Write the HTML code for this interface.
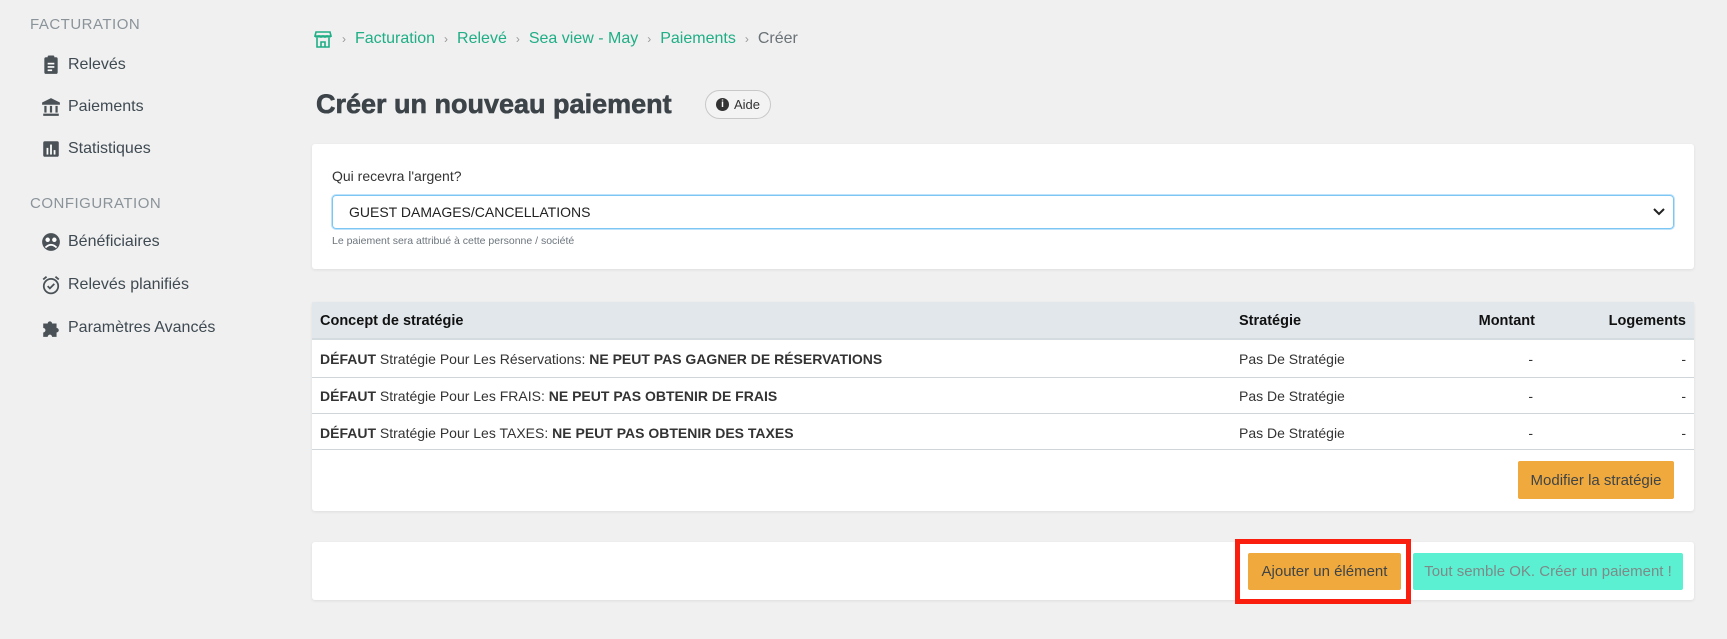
<!DOCTYPE html>
<html><head><meta charset="utf-8"><style>
*{box-sizing:border-box;margin:0;padding:0}
body{width:1727px;height:639px;background:#f0f0f0;font-family:"Liberation Sans",Arial,sans-serif;color:#333;position:relative;overflow:hidden}
.a{position:absolute}
.sec{color:#8a9399;font-size:15px;letter-spacing:.5px;left:30px}
.it{left:41px;font-size:16px;color:#3f4a52;display:flex;align-items:center;gap:7px}
.it svg{width:20px;height:20px}
.bc{left:313px;top:29px;font-size:16px;display:flex;align-items:center;gap:9px;color:#1fae85}
.bc .s{color:#999;font-size:12px}
.card{background:#fff;border-radius:3px;box-shadow:0 1px 3px rgba(0,0,0,.08)}
.row{position:absolute;left:0;right:0;border-top:1px solid #cfd5d9;font-size:14px;color:#333}
.btn{position:absolute;background:#f0a93d;color:#3f4448;font-size:15px;display:flex;align-items:center;justify-content:center;border-radius:2px}
</style></head><body>
<div class="a sec" style="top:16px">FACTURATION</div>
<div class="a it" style="top:55px"><svg viewBox="0 0 18 18"><rect x="3" y="2" width="12" height="15" rx="1.5" fill="#4a5257"/><rect x="6" y="0.5" width="6" height="3" rx="1" fill="#4a5257"/><rect x="6" y="7" width="6" height="1.5" fill="#fff"/><rect x="6" y="10" width="6" height="1.5" fill="#fff"/><rect x="6" y="13" width="4" height="1.5" fill="#fff"/></svg>Relevés</div>
<div class="a it" style="top:97px"><svg viewBox="0 0 18 18"><path d="M9 1L1 5v2h16V5z M2 15h14v2H2z" fill="#4a5257"/><rect x="3" y="8" width="2" height="6" fill="#4a5257"/><rect x="8" y="8" width="2" height="6" fill="#4a5257"/><rect x="13" y="8" width="2" height="6" fill="#4a5257"/></svg>Paiements</div>
<div class="a it" style="top:139px"><svg viewBox="0 0 18 18"><rect x="2" y="2" width="14" height="14" rx="1.5" fill="#4a5257"/><rect x="5" y="8" width="1.6" height="6" fill="#fff"/><rect x="8.2" y="5" width="1.6" height="9" fill="#fff"/><rect x="11.4" y="10" width="1.6" height="4" fill="#fff"/></svg>Statistiques</div>
<div class="a sec" style="top:195px">CONFIGURATION</div>
<div class="a it" style="top:232px"><svg viewBox="0 0 18 18"><circle cx="9" cy="9" r="8" fill="#4a5257"/><circle cx="6" cy="7" r="2" fill="#fff"/><circle cx="12" cy="7" r="2" fill="#fff"/><path d="M4 14q5-5 10 0" stroke="#fff" stroke-width="1.6" fill="none"/></svg>Bénéficiaires</div>
<div class="a it" style="top:275px"><svg viewBox="0 0 18 18"><circle cx="9" cy="10" r="6.5" stroke="#4a5257" stroke-width="1.6" fill="none"/><path d="M6 10l2 2 4-4M2 4l3-2.5M16 4l-3-2.5" stroke="#4a5257" stroke-width="1.6" fill="none"/></svg>Relevés planifiés</div>
<div class="a it" style="top:318px"><svg viewBox="0 0 18 18"><path d="M2 5h4a2 2 0 1 1 4 0h4v4a2 2 0 1 1 0 4v4H10a2 2 0 1 0-4 0H2v-4a2 2 0 1 0 0-4z" fill="#4a5257"/></svg>Paramètres Avancés</div>

<div class="a bc"><svg width="20" height="20" viewBox="0 0 20 20" fill="none" stroke="#1fae85" stroke-width="1.6"><path d="M3 3h14l1 4H2z"/><path d="M2 7q2 2 4 0q2 2 4 0q2 2 4 0q2 2 4 0"/><path d="M4 9v9h12V9"/><path d="M8 18v-5h4v5"/></svg><span class="s">›</span>Facturation<span class="s">›</span>Relevé<span class="s">›</span>Sea view - May<span class="s">›</span>Paiements<span class="s">›</span><span style="color:#6a7277">Créer</span></div>

<div class="a" style="left:316px;top:89px;font-size:27px;font-weight:bold;color:#3c4449;-webkit-text-stroke:0.6px #3c4449">Créer un nouveau paiement</div>
<div class="a" style="left:705px;top:90px;width:66px;height:29px;border:1px solid #c8c8c8;border-radius:15px;background:#f3f3f3;font-size:13px;color:#333;display:flex;align-items:center;justify-content:center;gap:5px"><span style="width:13px;height:13px;border-radius:50%;background:#333;color:#fff;font-size:10px;font-weight:bold;display:flex;align-items:center;justify-content:center">i</span>Aide</div>

<div class="a card" style="left:312px;top:144px;width:1382px;height:125px">
<div class="a" style="left:20px;top:24px;font-size:14px">Qui recevra l'argent?</div>
<div class="a" style="left:20px;top:51px;width:1342px;height:34px;border:1px solid #7cc6f3;border-radius:4px;box-shadow:0 0 0 1px #bfe3fa;font-size:14px;color:#222;display:flex;align-items:center;padding-left:16px">GUEST DAMAGES/CANCELLATIONS<svg class="a" style="right:8px;top:12px" width="12" height="8" viewBox="0 0 12 8"><path d="M1 1l5 5 5-5" stroke="#222" stroke-width="2" fill="none"/></svg></div>
<div class="a" style="left:20px;top:91px;font-size:10.5px;color:#6c757d">Le paiement sera attribué à cette personne / société</div>
</div>

<div class="a card" style="left:312px;top:302px;width:1382px;height:209px">
<div class="a" style="left:0;right:0;top:0;height:38px;background:#e1e7ea;border-bottom:2px solid #d5dcdf;font-size:14.5px;font-weight:bold;color:#111">
<span class="a" style="left:8px;top:11px">Concept de stratégie</span><span class="a" style="left:927px;top:11px">Stratégie</span><span class="a" style="right:159px;top:11px">Montant</span><span class="a" style="right:8px;top:11px">Logements</span></div>
<div class="row" style="top:38px;height:37px;border-top:none"><span class="a" style="left:8px;top:11px"><b>DÉFAUT</b> Stratégie Pour Les Réservations: <b>NE PEUT PAS GAGNER DE RÉSERVATIONS</b></span><span class="a" style="left:927px;top:11px">Pas De Stratégie</span><span class="a" style="right:161px;top:11px">-</span><span class="a" style="right:8px;top:11px">-</span></div>
<div class="row" style="top:75px;height:36px"><span class="a" style="left:8px;top:10px"><b>DÉFAUT</b> Stratégie Pour Les FRAIS: <b>NE PEUT PAS OBTENIR DE FRAIS</b></span><span class="a" style="left:927px;top:10px">Pas De Stratégie</span><span class="a" style="right:161px;top:10px">-</span><span class="a" style="right:8px;top:10px">-</span></div>
<div class="row" style="top:111px;height:36px"><span class="a" style="left:8px;top:11px"><b>DÉFAUT</b> Stratégie Pour Les TAXES: <b>NE PEUT PAS OBTENIR DES TAXES</b></span><span class="a" style="left:927px;top:11px">Pas De Stratégie</span><span class="a" style="right:161px;top:11px">-</span><span class="a" style="right:8px;top:11px">-</span></div>
<div class="row" style="top:147px;height:1px"></div>
<div class="btn" style="left:1206px;top:159px;width:156px;height:38px">Modifier la stratégie</div>
</div>

<div class="a card" style="left:312px;top:542px;width:1382px;height:58px"></div>
<div class="a" style="left:1235px;top:539px;width:176px;height:65px;border:5px solid #fa1e0e"></div>
<div class="btn" style="left:1248px;top:553px;width:153px;height:37px">Ajouter un élément</div>
<div class="btn" style="left:1413px;top:553px;width:270px;height:37px;background:#5cf0d2;color:#7d8a88">Tout semble OK. Créer un paiement !</div>
</body></html>
